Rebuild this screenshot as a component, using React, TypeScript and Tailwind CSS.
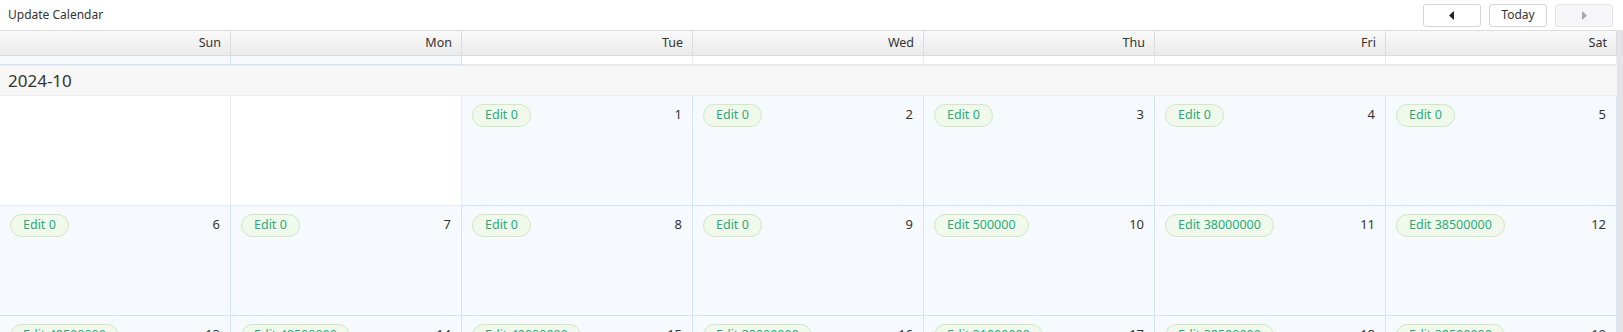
type Day = { day: number; value: number } | null

const weekdays = ["Sun", "Mon", "Tue", "Wed", "Thu", "Fri", "Sat"]

const weeks: Day[][] = [
  [null, null, { day: 1, value: 0 }, { day: 2, value: 0 }, { day: 3, value: 0 }, { day: 4, value: 0 }, { day: 5, value: 0 }],
  [
    { day: 6, value: 0 },
    { day: 7, value: 0 },
    { day: 8, value: 0 },
    { day: 9, value: 0 },
    { day: 10, value: 500000 },
    { day: 11, value: 38000000 },
    { day: 12, value: 38500000 },
  ],
  [
    { day: 13, value: 40500000 },
    { day: 14, value: 40500000 },
    { day: 15, value: 40000000 },
    { day: 16, value: 38000000 },
    { day: 17, value: 31000000 },
    { day: 18, value: 38500000 },
    { day: 19, value: 38500000 },
  ],
]

// previous month's last week, only its bottom edge is visible
const sliver = [true, true, false, false, false, false, false]

function Arrow({ dir, muted }: { dir: "left" | "right"; muted?: boolean }) {
  return (
    <svg width="6" height="9" viewBox="0 0 6 9">
      {dir === "left" ? (
        <polygon points="5,0 5,9 0,4.5" fill={muted ? "#a8a8a8" : "#222"} />
      ) : (
        <polygon points="1,0 1,9 6,4.5" fill={muted ? "#a8a8a8" : "#222"} />
      )}
    </svg>
  )
}

export default function App() {
  return (
    <div className="w-[1623px] h-[332px] overflow-hidden bg-white text-[#333] font-['Noto_Sans',sans-serif]">

      {/* TOOLBAR */}
      <div className="h-[30px] flex items-center justify-between pl-2 pr-[10px]">
        <div className="text-[12px] leading-none">Update Calendar</div>
        <div className="flex items-center gap-2">
          <button className="w-[58px] h-[23px] flex items-center justify-center bg-white border border-[#d6d6d6] rounded-[3px]">
            <Arrow dir="left" />
          </button>
          <button className="w-[58px] h-[23px] flex items-center justify-center bg-white border border-[#d6d6d6] rounded-[3px] text-[12px]">
            Today
          </button>
          <button className="w-[58px] h-[23px] flex items-center justify-center bg-[#f6f6f8] border border-[#e6e6e8] rounded-[3px]">
            <Arrow dir="right" muted />
          </button>
        </div>
      </div>

      <div className="flex">
        <div className="flex-1">

          {/* WEEKDAY HEADER */}
          <div className="grid grid-cols-7 h-[26px] border-y border-[#dcdcdc] bg-gradient-to-b from-[#f9f9f9] to-[#ebebeb]">
            {weekdays.map((w) => (
              <div key={w} className="border-r border-[#dcdcdc] flex items-center justify-end pr-[9px] text-[12.5px]">
                {w}
              </div>
            ))}
          </div>

          {/* LAST ROW OF PREVIOUS MONTH */}
          <div className="grid grid-cols-7 h-[9px]">
            {sliver.map((blue, i) =>
              blue ? (
                <div key={i} className="bg-[#f6faff] border-r border-b border-[#d3e4f9]" />
              ) : (
                <div key={i} className="bg-white border-r border-b border-[#ececec]" />
              )
            )}
          </div>

          {/* MONTH LABEL */}
          <div className="h-[31px] bg-[#f7f7f7] border-y border-[#ebebeb] flex items-center pl-2 text-[17px]">
            2024-10
          </div>

          {/* WEEKS */}
          {weeks.map((week, wi) => (
            <div key={wi} className="grid grid-cols-7 h-[110px]">
              {week.map((d, di) =>
                d ? (
                  <div key={di} className="bg-[#f6faff] border-r border-b border-[#d3e4f9] flex justify-between items-start pl-[10px] pr-[10px] pt-2">
                    <span className="h-[23px] flex items-center px-3 rounded-full bg-[#f0f9eb] border border-[#cfe8bf] text-[#1fae7c] text-[12.5px]">
                      Edit {d.value}
                    </span>
                    <span className="text-[13px] leading-[20px]">{d.day}</span>
                  </div>
                ) : (
                  <div key={di} className="bg-white border-r border-b border-[#ececec]" />
                )
              )}
            </div>
          ))}

        </div>

        {/* SCROLLBAR */}
        <div className="w-[6px] bg-[#e4e4e6]" />
      </div>
    </div>
  )
}
